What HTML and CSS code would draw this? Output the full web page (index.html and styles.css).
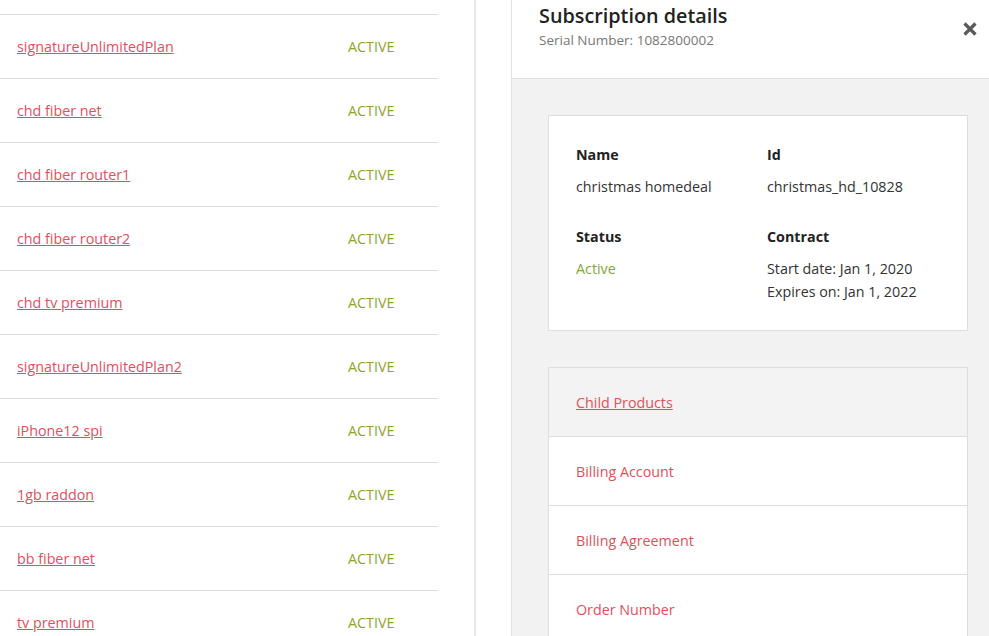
FILE: index.html
```html
<!DOCTYPE html>
<html>
<head>
<meta charset="utf-8">
<link rel="stylesheet" href="styles.css">
</head>
<body>
<div class="page">
  <div class="left">
    <ul class="plist">
      <li class="prow"><a class="plink" href="#">signatureUnlimitedPlan</a><span class="pstatus">ACTIVE</span></li>
      <li class="prow"><a class="plink" href="#">chd fiber net</a><span class="pstatus">ACTIVE</span></li>
      <li class="prow"><a class="plink" href="#">chd fiber router1</a><span class="pstatus">ACTIVE</span></li>
      <li class="prow"><a class="plink" href="#">chd fiber router2</a><span class="pstatus">ACTIVE</span></li>
      <li class="prow"><a class="plink" href="#">chd tv premium</a><span class="pstatus">ACTIVE</span></li>
      <li class="prow"><a class="plink" href="#">signatureUnlimitedPlan2</a><span class="pstatus">ACTIVE</span></li>
      <li class="prow"><a class="plink" href="#">iPhone12 spi</a><span class="pstatus">ACTIVE</span></li>
      <li class="prow"><a class="plink" href="#">1gb raddon</a><span class="pstatus">ACTIVE</span></li>
      <li class="prow"><a class="plink" href="#">bb fiber net</a><span class="pstatus">ACTIVE</span></li>
      <li class="prow"><a class="plink" href="#">tv premium</a><span class="pstatus">ACTIVE</span></li>
    </ul>
  </div>
  <div class="gap"></div>
  <aside class="panel">
    <header class="phead">
      <div class="titles">
        <h1 class="title">Subscription details</h1>
        <div class="serial">Serial Number: 1082800002</div>
      </div>
      <button class="close" aria-label="Close">
        <svg width="16" height="16" viewBox="0 0 16 16"><path d="M2.5 2.5 L13.5 13.5 M13.5 2.5 L2.5 13.5" stroke="#5a5a5a" stroke-width="3.2" stroke-linecap="butt"/></svg>
      </button>
    </header>
    <div class="pbody">
      <section class="card info">
        <div class="field">
          <div class="label">Name</div>
          <div class="value">christmas homedeal</div>
        </div>
        <div class="field">
          <div class="label">Id</div>
          <div class="value">christmas_hd_10828</div>
        </div>
        <div class="field">
          <div class="label">Status</div>
          <div class="value ok">Active</div>
        </div>
        <div class="field">
          <div class="label">Contract</div>
          <div class="value">Start date: Jan 1, 2020<br>Expires on: Jan 1, 2022</div>
        </div>
      </section>
      <section class="card links">
        <div class="lrow sel"><a class="llink u" href="#">Child Products</a></div>
        <div class="lrow"><a class="llink" href="#">Billing Account</a></div>
        <div class="lrow"><a class="llink" href="#">Billing Agreement</a></div>
        <div class="lrow"><a class="llink" href="#">Order Number</a></div>
      </section>
    </div>
  </aside>
</div>
</body>
</html>
```

FILE: styles.css
```css
* { box-sizing: border-box; }
html, body { margin: 0; padding: 0; height: 100%; overflow: hidden; }
body {
  font-family: "Open Sans", "Noto Sans", sans-serif;
  font-size: 14.3px;
  color: #333;
  background: #fff;
}
.page {
  display: flex;
  height: 636px;
}
.left {
  width: 476px;
  flex: none;
  border-right: 2px solid #e8e8e8;
  padding-top: 14px;
}
.plist {
  list-style: none;
  margin: 0;
  padding: 0;
  width: 438px;
  border-top: 1px solid #dcdcdc;
}
.prow {
  display: flex;
  align-items: center;
  height: 64px;
  border-bottom: 1px solid #dcdcdc;
  padding-left: 17px;
}
.plink {
  color: #e0505c;
  text-decoration: underline;
  width: 331px;
}
.pstatus {
  color: #8ea52a;
}
.gap {
  width: 35px;
  flex: none;
}
.panel {
  flex: 1;
  border-left: 1px solid #e2e2e2;
  display: flex;
  flex-direction: column;
  background: #f2f2f2;
}
.phead {
  height: 79px;
  flex: none;
  background: #fff;
  border-bottom: 1px solid #e0e0e0;
  display: flex;
  justify-content: space-between;
  padding: 2px 10px 0 27px;
}
.title {
  margin: 0;
  font-size: 19.8px;
  font-weight: 600;
  color: #222;
  line-height: 27px;
}
.serial {
  font-size: 13.5px;
  color: #777;
  line-height: 20px;
  margin-top: 1px;
}
.close {
  border: 0;
  background: none;
  padding: 0;
  margin-top: 18px;
  width: 18px;
  height: 18px;
  display: flex;
  align-items: center;
  justify-content: center;
}
.pbody {
  padding: 36px 21px 0 36px;
}
.card {
  background: #fff;
  border: 1px solid #dedede;
  width: 420px;
}
.info {
  display: grid;
  grid-template-columns: 191px 1fr;
  row-gap: 27px;
  padding: 27px 27px 27px;
  line-height: 23px;
}
.label {
  font-weight: 700;
  color: #222;
}
.value {
  margin-top: 9px;
  color: #333;
}
.value.ok { color: #7daa3a; }
.links {
  margin-top: 36px;
}
.lrow {
  height: 69px;
  display: flex;
  align-items: center;
  padding-left: 27px;
  border-top: 1px solid #dedede;
}
.lrow:first-child { border-top: 0; height: 68px; }
.lrow.sel { background: #f3f3f3; }
.llink {
  color: #e0505c;
  text-decoration: none;
}
.llink.u { text-decoration: underline; }
```
